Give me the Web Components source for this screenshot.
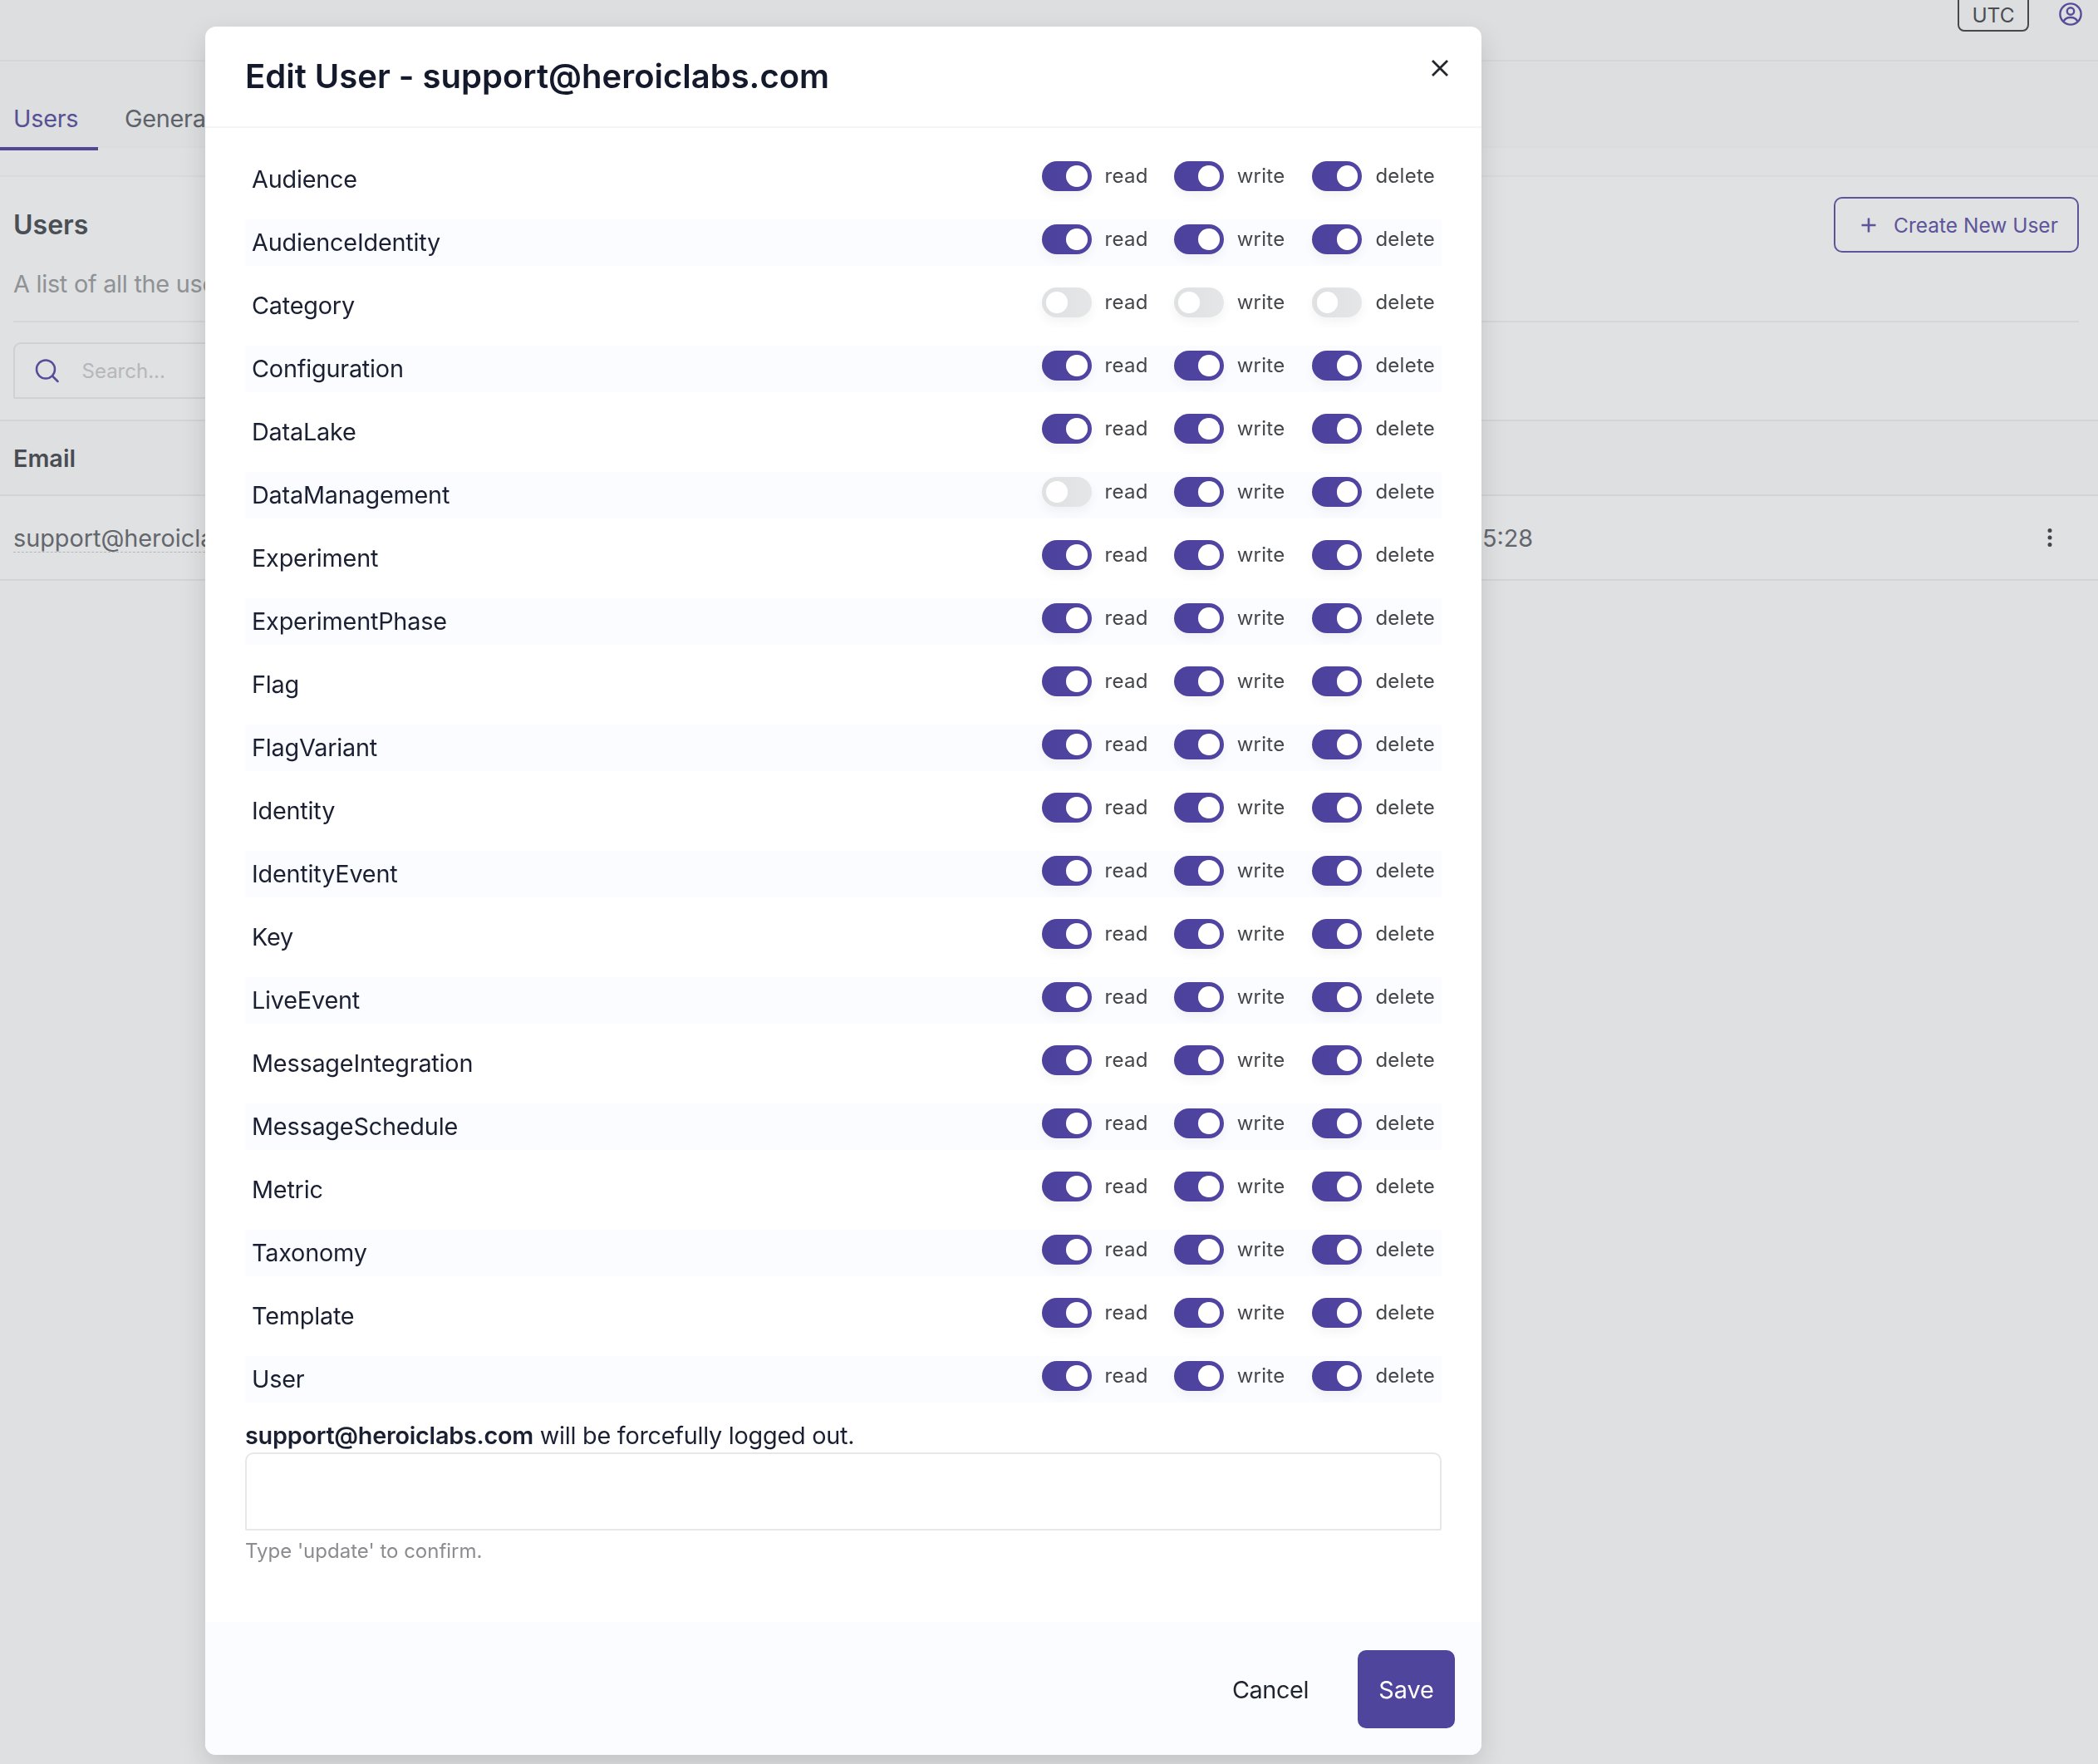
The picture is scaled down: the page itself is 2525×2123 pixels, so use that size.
<!doctype html>
<html>
<head>
<meta charset="utf-8">
<title>Users</title>
<style>
  html, body { margin: 0; height: 100%; }
  body { background: #fdfeff; font-family: Inter, "Liberation Sans", sans-serif; overflow: hidden; }
</style>
</head>
<body>
<app-topbar></app-topbar>
<app-tabs></app-tabs>
<users-panel></users-panel>
<modal-overlay></modal-overlay>
<edit-user-modal email="support@heroiclabs.com"></edit-user-modal>

<script>
const html = String.raw;

class AppTopbar extends HTMLElement {
  constructor() {
    super();
    this.attachShadow({ mode: "open" });
    this.shadowRoot.innerHTML = html`
      <style>
        :host { display: flex; justify-content: flex-end; height: 72px; border-bottom: 2px solid #f2f4f5; background: #fbfcfd; }
        .utc {
          box-sizing: border-box; width: 86px; height: 49px; margin-top: -11px; border: 2.5px solid #4f5257; border-radius: 8px;
          display: flex; align-items: center; justify-content: center; padding-top: 9px;
          font-size: 24.5px; color: #54575d;
        }
        svg { display: block; width: 30px; height: 30px; margin: 2px 18px 0 35px; }
      </style>
      <div class="utc">UTC</div>
      <svg viewBox="0 0 30 30" fill="none" stroke="#6257ab" stroke-width="2.4">
        <circle cx="15" cy="15" r="12.6"/>
        <circle cx="15" cy="11.5" r="4.2"/>
        <path d="M6.5 24c1.5-3.6 4.8-5 8.5-5s7 1.4 8.5 5"/>
      </svg>
    `;
  }
}

class AppTabs extends HTMLElement {
  constructor() {
    super();
    this.attachShadow({ mode: "open" });
    this.shadowRoot.innerHTML = html`
      <style>
        :host { display: flex; height: 104px; box-sizing: border-box; border-bottom: 2px solid #f9fafb; background: #fbfcfd; font-size: 28.8px; letter-spacing: -0.25px; color: #6d7076; }
        div { box-sizing: border-box; height: 107px; padding: 50px 0 0 16px; line-height: 38px; }
        .active { width: 118px; color: #655ba8; border-bottom: 4px solid #5c51a6; }
        .tab { padding-left: 32px; }
      </style>
      <div class="active">Users</div>
      <div class="tab">General</div>
    `;
  }
}

class UsersPanel extends HTMLElement {
  constructor() {
    super();
    this.attachShadow({ mode: "open" });
    this.shadowRoot.innerHTML = html`
      <style>
        :host { display: block; margin-top: 33px; background: #fff; border-top: 2px solid #f6f7f8; border-bottom: 2px solid #f0f1f2; height: 484px; }
        .head { display: flex; justify-content: space-between; align-items: flex-start; margin: 0 23px 0 16px; height: 175px; box-sizing: border-box; border-bottom: 2px solid #f2f3f5; }
        h2 { margin: 37px 0 0; font-size: 32px; line-height: 42px; font-weight: 600; color: #55585f; }
        p { margin: 31px 0 0; font-size: 28.8px; line-height: 38px; letter-spacing: -0.25px; color: #a3a5a8; }
        .create {
          box-sizing: border-box; width: 295px; height: 67px; margin-top: 24px; border: 2.5px solid #6a60ad; border-radius: 10px;
          display: flex; align-items: center; padding-left: 27.5px; gap: 18.5px; color: #6a60ad; font-size: 24.5px;
        }
        .create svg { width: 24px; height: 24px; }
        .search-row { height: 119px; box-sizing: border-box; padding: 24px 0 0 16px; border-bottom: 2px solid #f0f1f2; }
        .search {
          box-sizing: border-box; width: 400px; height: 68px; border: 2.5px solid #eceeef; border-radius: 9px 0 0 2px;
          display: flex; align-items: center; padding-left: 21.5px; gap: 27px; font-size: 24px; color: #cfd0d2;
        }
        .search svg { width: 32px; height: 32px; }
        .th { height: 90px; box-sizing: border-box; padding-left: 16px; display: flex; align-items: center; font-size: 28.8px; font-weight: 600; color: #54575d; border-bottom: 2px solid #f0f1f2; background: #fdfdfe; }
        .tr { height: 100px; display: grid; grid-template-columns: 1768px 1fr 40px; align-items: center; padding: 0 38px 0 16px; font-size: 28.8px; color: #71747a; }
        .email { text-decoration: underline dashed 1px #cfd0d3; text-underline-offset: 6px; justify-self: start; }
        .kebab { width: 30px; height: 30px; display: block; justify-self: center; }
      </style>
      <div class="head">
        <div>
          <h2>Users</h2>
          <p>A list of all the users</p>
        </div>
        <div class="create">
          <svg viewBox="0 0 24 24" stroke="#6a60ad" stroke-width="2.6" fill="none"><path d="M12 3.5v17M3.5 12h17"/></svg>
          Create New User
        </div>
      </div>
      <div class="search-row">
        <div class="search">
          <svg viewBox="0 0 32 32" fill="none" stroke="#6257ab" stroke-width="2.5" stroke-linecap="round"><circle cx="15" cy="14.500" r="11"/><path d="M23 22.500l6.500 6.500"/></svg>
          Search...
        </div>
      </div>
      <div class="th">Email</div>
      <div class="tr">
        <span class="email">support@heroicla</span>
        <span>5:28</span>
        <svg class="kebab" viewBox="0 0 30 30" fill="#4c4f55"><circle cx="15" cy="6.500" r="2.500"/><circle cx="15" cy="15" r="2.500"/><circle cx="15" cy="23.500" r="2.500"/></svg>
      </div>
    `;
  }
}

class ModalOverlay extends HTMLElement {
  constructor() {
    super();
    this.attachShadow({ mode: "open" });
    this.shadowRoot.innerHTML = html`
      <style>
        :host { position: fixed; inset: 0; display: block; background: rgba(0, 5, 15, 0.12); }
      </style>
    `;
  }
}

class PermToggle extends HTMLElement {
  constructor() {
    super();
    this.attachShadow({ mode: "open" });
  }

  connectedCallback() {
    const on = this.getAttribute("on") !== "false";
    this.shadowRoot.innerHTML = html`
      <style>
        :host { display: flex; align-items: center; gap: 16px; font-size: 24px; letter-spacing: 0.25px; color: #45464a; }
        :host(:first-child) { margin-right: -2px; }
        .track {
          width: 60px; height: 36px; border-radius: 18px; position: relative;
          box-shadow: 0 6px 12px rgba(60, 60, 80, 0.06);
          background: linear-gradient(90deg, #4c419b, #5045a3);
        }
        .track.off { background: linear-gradient(90deg, #dfe0e1, #e4e6e7); }
        .knob { position: absolute; top: 5.2px; right: 5px; width: 25.6px; height: 25.6px; border-radius: 50%; background: #fff; }
        .off .knob { right: auto; left: 5.500px; }
        span { padding-bottom: 2px; }
      </style>
      <div class="track ${on ? "" : "off"}"><div class="knob"></div></div>
      <span>${this.getAttribute("label")}</span>
    `;
  }
}

class PermRow extends HTMLElement {
  constructor() {
    super();
    this.attachShadow({ mode: "open" });
  }

  connectedCallback() {
    const off = (this.getAttribute("off") || "").split(",");
    const toggles = ["read", "write", "delete"]
      .map((action) => html`<perm-toggle label="${action}" on="${!off.includes(action)}"></perm-toggle>`)
      .join("");
    this.shadowRoot.innerHTML = html`
      <style>
        :host { display: flex; align-items: center; justify-content: space-between; height: 56px; padding: 0 8px; font-size: 28.8px; letter-spacing: -0.2px; color: #1a2032; }
        :host(:nth-child(even)) { background: #fafcff; }
        .toggles { display: flex; gap: 33px; margin-bottom: 8px; }
        span { padding-bottom: 1px; }
      </style>
      <span><slot></slot></span>
      <div class="toggles">${toggles}</div>
    `;
  }
}

class EditUserModal extends HTMLElement {
  constructor() {
    super();
    this.attachShadow({ mode: "open" });
  }

  connectedCallback() {
    const email = this.getAttribute("email");
    const rows = [
      "Audience", "AudienceIdentity", "Category:read,write,delete", "Configuration", "DataLake",
      "DataManagement:read", "Experiment", "ExperimentPhase", "Flag", "FlagVariant", "Identity",
      "IdentityEvent", "Key", "LiveEvent", "MessageIntegration", "MessageSchedule", "Metric",
      "Taxonomy", "Template", "User",
    ];
    this.shadowRoot.innerHTML = html`
      <style>
        :host {
          position: absolute; top: 32px; left: 247px; width: 1536px; height: 2080px;
          display: flex; flex-direction: column; overflow: hidden; background: #fff; border-radius: 13px;
          color: #1a2032; box-shadow: 0 12px 32px rgba(0, 0, 0, 0.13);
        }
        header { flex: none; height: 122px; box-sizing: border-box; border-bottom: 2px solid #f3f4f6; display: flex; justify-content: space-between; padding: 0 38px 0 48px; }
        h1 { margin: 18px 0 0; font-size: 40px; line-height: 84px; font-weight: 600; color: #141a2c; }
        .close { width: 24px; height: 24px; margin-top: 38px; }
        main { flex: 1; padding: 34px 48px 0; }
        .rows { display: grid; gap: 20px; }
        .warn { margin: 21px 0 0; font-size: 28.8px; line-height: 38px; letter-spacing: -0.25px; }
        b { font-weight: 600; }
        .input { box-sizing: border-box; height: 94px; margin-top: 1px; border: 2px solid #e6e7e8; border-radius: 10px 10px 2px 2px; }
        .hint { margin: 8px 0 0; font-size: 24px; line-height: 34px; color: #8b8c8f; }
        footer { flex: none; height: 160px; box-sizing: border-box; background: #fafcff; padding: 34px 32px 0; display: flex; justify-content: flex-end; align-items: flex-start; gap: 59px; font-size: 28.8px; }
        .cancel { height: 94px; display: flex; align-items: center; color: #20242e; letter-spacing: -0.4px; }
        .save { width: 117px; height: 94px; border-radius: 10px; background: #50459d; color: #fff; display: flex; align-items: center; justify-content: center; }
      </style>
      <header>
        <h1>Edit User - ${email}</h1>
        <svg class="close" viewBox="0 0 24 24" fill="none" stroke="#23262d" stroke-width="2.8"><path d="M3 3l18 18M21 3L3 21"/></svg>
      </header>
      <main>
        <div class="rows">
          ${rows.map((row) => {
            const [name, off] = row.split(":");
            return html`<perm-row off="${off || ""}">${name}</perm-row>`;
          }).join("")}
        </div>
        <p class="warn"><b>${email}</b> will be forcefully logged out.</p>
        <div class="input"></div>
        <p class="hint">Type 'update' to confirm.</p>
      </main>
      <footer>
        <div class="cancel">Cancel</div>
        <div class="save">Save</div>
      </footer>
    `;
  }
}

customElements.define("app-topbar", AppTopbar);
customElements.define("app-tabs", AppTabs);
customElements.define("users-panel", UsersPanel);
customElements.define("modal-overlay", ModalOverlay);
customElements.define("perm-toggle", PermToggle);
customElements.define("perm-row", PermRow);
customElements.define("edit-user-modal", EditUserModal);
</script>
</body>
</html>
